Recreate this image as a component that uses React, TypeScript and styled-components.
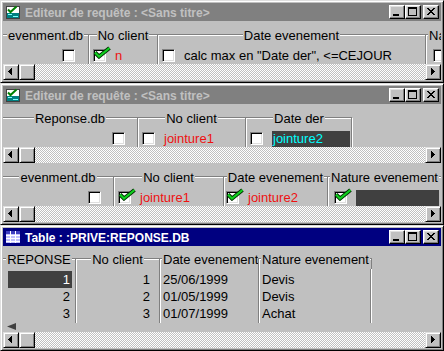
import React from "react";
import styled, { createGlobalStyle, css } from "styled-components";

const GlobalStyle = createGlobalStyle`
  html, body { margin: 0; padding: 0; background: #808080; }
  body { font-family: "Liberation Sans", Arial, sans-serif; }
  * { box-sizing: border-box; }
`;

const raised = css`
  border: 1px solid;
  border-color: #dfdfdf #000 #000 #dfdfdf;
  box-shadow: inset 1px 1px #fff, inset -1px -1px #808080;
`;

const Desktop = styled.div`
  width: 444px;
  height: 351px;
  overflow: hidden;
  display: grid;
  grid-template-rows: 83px 142px 126px;
  background: #808080;
`;

const Window = styled.div<{ $rows: string }>`
  min-height: 0;
  overflow: hidden;
  display: grid;
  grid-template-rows: ${(p) => p.$rows};
  padding: 2px;
  background: #c0c0c0;
  ${raised}
`;

const TitleBar = styled.div<{ $active?: boolean }>`
  height: 18px;
  display: flex;
  align-items: center;
  gap: 4px;
  padding: 0 2px;
  background: ${(p) => (p.$active ? "#000080" : "#808080")};
  color: ${(p) => (p.$active ? "#fff" : "#c0c0c0")};
  font: bold 12px "Liberation Sans", Arial, sans-serif;
`;

const TitleText = styled.span`
  flex: 1;
  white-space: nowrap;
  padding-top: 2px;
`;

const Caption = styled.div`
  display: flex;
  align-items: center;
`;

const CaptionButton = styled.div<{ $gap?: number }>`
  width: 16px;
  height: 14px;
  margin-left: ${(p) => p.$gap ?? 0}px;
  display: flex;
  background: #c0c0c0;
  border: 1px solid;
  border-color: #fff #000 #000 #fff;
  box-shadow: inset -1px -1px #808080, inset 1px 1px #dfdfdf;
`;

const Pane = styled.div`
  min-height: 0;
  display: grid;
  grid-template-rows: 43px 16px;
`;

const Fields = styled.div`
  min-height: 0;
  display: flex;
  padding-top: 6px;
  overflow: hidden;
`;

const Col = styled.div<{ $w?: number }>`
  ${(p) => (p.$w ? `width: ${p.$w}px; flex: none;` : `flex: 1; min-width: 0;`)}
  display: flex;
  flex-direction: column;
  overflow: hidden;
`;

const ColHead = styled.div<{ $l?: boolean; $r?: boolean }>`
  height: 18px;
  flex: none;
  display: flex;
  &::before,
  &::after {
    content: "";
    flex: 1 1 0;
    min-width: 2px;
    height: 11px;
    margin-top: 7px;
    border-top: 1px solid #808080;
    box-shadow: inset 0 1px #fff;
  }
  ${(p) =>
    p.$l &&
    css`
      &::before {
        border-left: 1px solid #808080;
        box-shadow: inset 1px 1px #fff;
      }
    `}
  ${(p) =>
    p.$r &&
    css`
      &::after {
        border-right: 1px solid #fff;
        box-shadow: inset -1px 0 #808080, inset 0 1px #fff;
      }
    `}
`;

const Label = styled.span`
  flex: none;
  padding: 0 1px;
  font-size: 13px;
  line-height: 18px;
  color: #000;
  white-space: nowrap;
`;

const ColBody = styled.div<{
  $l?: boolean;
  $r?: boolean;
  $end?: boolean;
  $pl?: number;
  $pr?: number;
  $pt?: number;
  $stack?: boolean;
}>`
  flex: 1;
  min-height: 0;
  display: flex;
  flex-direction: ${(p) => (p.$stack ? "column" : "row")};
  align-items: ${(p) => (p.$stack ? "stretch" : "flex-start")};
  justify-content: ${(p) => (p.$end ? "flex-end" : "flex-start")};
  padding: ${(p) => p.$pt ?? 4}px ${(p) => p.$pr ?? 0}px 0 ${(p) => p.$pl ?? 0}px;
  border-left: ${(p) => (p.$l ? "1px solid #808080" : "none")};
  border-right: ${(p) => (p.$r ? "1px solid #fff" : "none")};
  box-shadow: ${(p) =>
    [p.$l && "inset 1px 0 #fff", p.$r && "inset -1px 0 #808080"].filter(Boolean).join(", ") || "none"};
`;

const Row = styled.div`
  height: 13px;
  display: flex;
  align-items: center;
  gap: 9px;
  font-size: 13px;
  white-space: nowrap;
`;

const Box = styled.span`
  position: relative;
  flex: none;
  width: 13px;
  height: 13px;
  background: #fff;
  border: 1px solid;
  border-color: #808080 #fff #fff #808080;
  box-shadow: inset 1px 1px #000, inset -1px -1px #dfdfdf;
`;

const Tick = styled.svg`
  position: absolute;
  left: -1px;
  top: -4px;
`;

const Value = styled.span<{ $tone?: "red" | "plain" }>`
  color: ${(p) => (p.$tone === "red" ? "#ee1111" : "#000")};
  line-height: 16px;
`;

const Picked = styled.span<{ $w: number }>`
  flex: none;
  width: ${(p) => p.$w}px;
  height: 16px;
  padding-left: 1px;
  line-height: 16px;
  background: #404040;
  color: #00ffff;
`;

const ScrollBar = styled.div`
  height: 16px;
  display: flex;
`;

const ScrollButton = styled.div`
  width: 16px;
  height: 16px;
  flex: none;
  display: flex;
  align-items: center;
  justify-content: center;
  background: #c0c0c0;
  ${raised}
`;

const Track = styled.div`
  flex: 1;
  background-color: #c0c0c0;
  background-image: conic-gradient(#fff 0 25%, transparent 0 50%, #fff 0 75%, transparent 0);
  background-size: 2px 2px;
`;

const TableArea = styled.div`
  min-height: 0;
  display: grid;
  grid-template-rows: 72px 9px;
  padding-top: 5px;
  overflow: hidden;
`;

const TableCols = styled.div`
  min-height: 0;
  display: flex;
  overflow: hidden;
`;

const Cell = styled.div<{ $right?: boolean; $sel?: boolean }>`
  height: 17px;
  flex: none;
  line-height: 17px;
  font-size: 13px;
  white-space: nowrap;
  text-align: ${(p) => (p.$right ? "right" : "left")};
  padding-right: ${(p) => (p.$sel !== undefined ? 2 : 0)}px;
  background: ${(p) => (p.$sel ? "#404040" : "transparent")};
  color: ${(p) => (p.$sel ? "#fff" : "#000")};
`;

const MarkRow = styled.div`
  padding-left: 4px;
  display: flex;
  align-items: flex-start;
`;

/* ---------- drawings ---------- */

function pixels(rows: string[], ox: number, oy: number) {
  let d = "";
  rows.forEach((r, y) =>
    [...r].forEach((c, x) => {
      if (c === "#") d += `M${x + ox} ${y + oy}h1v1h-1z`;
    })
  );
  return d;
}

const closeD = pixels(
  ["##....##", ".##..##.", "..####..", "...##...", "..####..", ".##..##.", "##....##"],
  3,
  2
);

function CaptionButtons() {
  return (
    <Caption>
      <CaptionButton>
        <svg width="14" height="12" shapeRendering="crispEdges">
          <rect x="3" y="8" width="6" height="2" fill="#000" />
        </svg>
      </CaptionButton>
      <CaptionButton>
        <svg width="14" height="12" shapeRendering="crispEdges">
          <path d="M2 1h9v9H2z M3 3v6h7V3z" fill="#000" fillRule="evenodd" />
        </svg>
      </CaptionButton>
      <CaptionButton $gap={2}>
        <svg width="14" height="12" shapeRendering="crispEdges">
          <path d={closeD} fill="#000" />
        </svg>
      </CaptionButton>
    </Caption>
  );
}

function QueryIcon() {
  return (
    <svg width="16" height="16" viewBox="0 0 16 16" shapeRendering="crispEdges">
      <rect x="1.5" y="2.5" width="13" height="12" fill="#fff" stroke="#404040" />
      <rect x="2" y="9" width="12" height="5" fill="#008080" />
      <rect x="3" y="10" width="4" height="1" fill="#7fffff" />
      <rect x="8" y="12" width="5" height="1" fill="#7fffff" />
      <path d="M3 5.5l2.5 2.5 6-5.5" fill="none" stroke="#008000" strokeWidth="2" shapeRendering="auto" />
    </svg>
  );
}

function TableIcon() {
  return (
    <svg width="16" height="16" viewBox="0 0 16 16" shapeRendering="crispEdges">
      <rect x="1" y="2" width="14" height="12" fill="#c0c0ff" />
      <rect x="1" y="2" width="14" height="3" fill="#4040c0" />
      {[6, 9, 12].map((y) => (
        <rect key={y} x="1" y={y} width="14" height="1" fill="#fff" />
      ))}
      {[5, 10].map((x) => (
        <rect key={x} x={x} y="2" width="1" height="12" fill="#fff" />
      ))}
    </svg>
  );
}

function CheckBox({ checked }: { checked?: boolean }) {
  return (
    <Box>
      {checked && (
        <Tick width="18" height="13" viewBox="0 0 18 13">
          <path d="M2 6.5l4 4L16.5 2" fill="none" stroke="#003000" strokeWidth="4" strokeLinejoin="miter" />
          <path d="M2 6.5l4 4L16.5 2" fill="none" stroke="#10d020" strokeWidth="2.2" strokeLinejoin="miter" />
        </Tick>
      )}
    </Box>
  );
}

function Scroll() {
  return (
    <ScrollBar>
      <ScrollButton>
        <svg width="14" height="14" shapeRendering="crispEdges">
          <path d="M4 6h1v1H4z M5 5h1v3H5z M6 4h1v5H6z M7 3h1v7H7z" fill="#000" />
        </svg>
      </ScrollButton>
      <ScrollButton />
      <Track />
      <ScrollButton>
        <svg width="14" height="14" shapeRendering="crispEdges">
          <path d="M5 3h1v7H5z M6 4h1v5H6z M7 5h1v3H7z M8 6h1v1H8z" fill="#000" />
        </svg>
      </ScrollButton>
    </ScrollBar>
  );
}

type FieldProps = {
  label: string;
  w?: number;
  l?: boolean;
  r?: boolean;
  end?: boolean;
  pl?: number;
  pr?: number;
  pt?: number;
  stack?: boolean;
  children?: React.ReactNode;
};

function Field({ label, w, l, r, end, pl, pr, pt, stack, children }: FieldProps) {
  return (
    <Col $w={w}>
      <ColHead $l={l} $r={r}>
        <Label>{label}</Label>
      </ColHead>
      <ColBody $l={l} $r={r} $end={end} $pl={pl} $pr={pr} $pt={pt} $stack={stack}>
        {children}
      </ColBody>
    </Col>
  );
}

const records = [
  { id: 1, client: 1, date: "25/06/1999", nature: "Devis" },
  { id: 2, client: 2, date: "01/05/1999", nature: "Devis" },
  { id: 3, client: 3, date: "01/07/1999", nature: "Achat" },
];

export default function App() {
  return (
    <>
      <GlobalStyle />
      <Desktop>
        <Window $rows="18px 59px">
          <TitleBar>
            <QueryIcon />
            <TitleText>Editeur de requête : &lt;Sans titre&gt;</TitleText>
            <CaptionButtons />
          </TitleBar>
          <Pane>
            <Fields>
              <Field label="evenment.db" w={85} end pr={13}>
                <Row>
                  <CheckBox />
                </Row>
              </Field>
              <Field label="No client" w={69} l pl={4}>
                <Row>
                  <CheckBox checked />
                  <Value $tone="red">n</Value>
                </Row>
              </Field>
              <Field label="Date evenement" w={268} l pl={4}>
                <Row>
                  <CheckBox />
                  <Value>calc max en "Date der", &lt;=CEJOUR</Value>
                </Row>
              </Field>
              <Field label="Nature evenement" l pl={7}>
                <Row>
                  <CheckBox />
                </Row>
              </Field>
            </Fields>
            <Scroll />
          </Pane>
        </Window>

        <Window $rows="18px 59px 59px">
          <TitleBar>
            <QueryIcon />
            <TitleText>Editeur de requête : &lt;Sans titre&gt;</TitleText>
            <CaptionButtons />
          </TitleBar>
          <Pane>
            <Fields>
              <Field label="Reponse.db" w={134} end pr={12}>
                <Row>
                  <CheckBox />
                </Row>
              </Field>
              <Field label="No client" w={108} l pl={4}>
                <Row>
                  <CheckBox />
                  <Value $tone="red">jointure1</Value>
                </Row>
              </Field>
              <Field label="Date der" w={108} l r pl={4}>
                <Row>
                  <CheckBox />
                  <Picked $w={78}>jointure2</Picked>
                </Row>
              </Field>
            </Fields>
            <Scroll />
          </Pane>
          <Pane>
            <Fields>
              <Field label="evenment.db" w={110} end pr={12}>
                <Row>
                  <CheckBox />
                </Row>
              </Field>
              <Field label="No client" w={110} l pl={4}>
                <Row>
                  <CheckBox checked />
                  <Value $tone="red">jointure1</Value>
                </Row>
              </Field>
              <Field label="Date evenement" w={104} l pl={2}>
                <Row>
                  <CheckBox checked />
                  <Value $tone="red">jointure2</Value>
                </Row>
              </Field>
              <Field label="Nature evenement" l pl={6}>
                <Row>
                  <CheckBox checked />
                  <Picked $w={83} />
                </Row>
              </Field>
            </Fields>
            <Scroll />
          </Pane>
        </Window>

        <Window $rows="18px 86px 16px">
          <TitleBar $active>
            <TableIcon />
            <TitleText>Table : :PRIVE:REPONSE.DB</TitleText>
            <CaptionButtons />
          </TitleBar>
          <TableArea>
            <TableCols>
              <Field label="REPONSE" w={72} stack pt={2} pl={5} pr={3}>
                {records.map((r, i) => (
                  <Cell key={r.id} $right $sel={i === 0}>
                    {r.id}
                  </Cell>
                ))}
              </Field>
              <Field label="No client" w={84} l stack pt={2} pr={9}>
                {records.map((r) => (
                  <Cell key={r.id} $right>
                    {r.client}
                  </Cell>
                ))}
              </Field>
              <Field label="Date evenement" w={99} l stack pt={2} pl={3}>
                {records.map((r) => (
                  <Cell key={r.id}>{r.date}</Cell>
                ))}
              </Field>
              <Field label="Nature evenement" w={114} l r stack pt={2} pl={3}>
                {records.map((r) => (
                  <Cell key={r.id}>{r.nature}</Cell>
                ))}
              </Field>
            </TableCols>
            <MarkRow>
              <svg width="10" height="7" viewBox="0 0 10 7">
                <polygon points="0,3.5 9,0 9,7" fill="#404040" />
              </svg>
            </MarkRow>
          </TableArea>
          <Scroll />
        </Window>
      </Desktop>
    </>
  );
}
